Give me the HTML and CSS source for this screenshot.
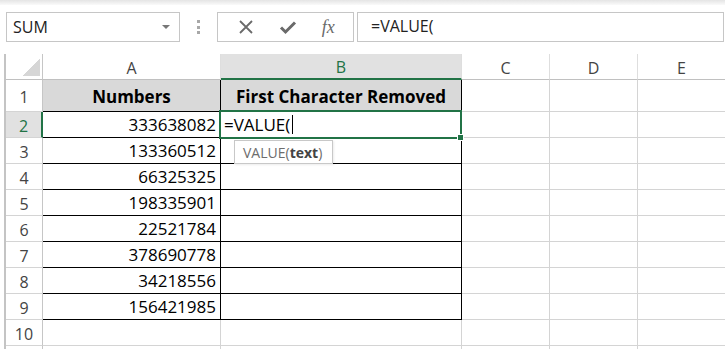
FILE: index.html
```html
<!DOCTYPE html>
<html lang="en">
<head>
    <meta charset="UTF-8">
    <title>VALUE formula</title>
    <link rel="stylesheet" href="styles.css">
</head>
<body>

    <div class="top-band"></div>

    <!-- Name box + formula bar -->
    <div class="toolbar">
        <div class="name-box">
            <span>SUM</span>
            <span class="caret"></span>
        </div>
        <div class="grip"><i></i><i></i><i></i></div>
        <div class="fx-buttons">
            <svg width="16" height="16" viewBox="0 0 16 16"><path d="M2 2 L14 14 M14 2 L2 14" stroke="#6a6a6a" stroke-width="1.8" fill="none"/></svg>
            <svg width="18" height="16" viewBox="0 0 18 16"><path d="M2 8.5 L6.5 13 L16 3.5" stroke="#6a6a6a" stroke-width="3" fill="none"/></svg>
            <span class="fx">fx</span>
        </div>
        <div class="formula-input">=VALUE(</div>
    </div>

    <!-- Sheet -->
    <div class="sheet">
        <div class="cell corner"><span class="tri"></span></div>
        <div class="cell col-head">A</div>
        <div class="cell col-head active">B</div>
        <div class="cell col-head">C</div>
        <div class="cell col-head">D</div>
        <div class="cell col-head">E</div>

        <div class="cell row-head">1</div>
        <div class="cell t fill title">Numbers</div>
        <div class="cell t fill title">First Character Removed</div>
        <div class="cell"></div><div class="cell"></div><div class="cell"></div>

        <div class="cell row-head active">2</div>
        <div class="cell t num">333638082</div>
        <div class="cell t editing">=VALUE(<span class="cursor"></span><span class="handle"></span></div>
        <div class="cell"></div><div class="cell"></div><div class="cell"></div>

        <div class="cell row-head">3</div>
        <div class="cell t num">133360512</div>
        <div class="cell t"></div>
        <div class="cell"></div><div class="cell"></div><div class="cell"></div>

        <div class="cell row-head">4</div>
        <div class="cell t num">66325325</div>
        <div class="cell t"></div>
        <div class="cell"></div><div class="cell"></div><div class="cell"></div>

        <div class="cell row-head">5</div>
        <div class="cell t num">198335901</div>
        <div class="cell t"></div>
        <div class="cell"></div><div class="cell"></div><div class="cell"></div>

        <div class="cell row-head">6</div>
        <div class="cell t num">22521784</div>
        <div class="cell t"></div>
        <div class="cell"></div><div class="cell"></div><div class="cell"></div>

        <div class="cell row-head">7</div>
        <div class="cell t num">378690778</div>
        <div class="cell t"></div>
        <div class="cell"></div><div class="cell"></div><div class="cell"></div>

        <div class="cell row-head">8</div>
        <div class="cell t num">34218556</div>
        <div class="cell t"></div>
        <div class="cell"></div><div class="cell"></div><div class="cell"></div>

        <div class="cell row-head">9</div>
        <div class="cell t num">156421985</div>
        <div class="cell t"></div>
        <div class="cell"></div><div class="cell"></div><div class="cell"></div>

        <div class="cell row-head">10</div>
        <div class="cell"></div><div class="cell"></div>
        <div class="cell"></div><div class="cell"></div><div class="cell"></div>

        <!-- next row, only its top edge shows -->
        <div class="cell row-head"></div>
        <div class="cell"></div><div class="cell"></div>
        <div class="cell"></div><div class="cell"></div><div class="cell"></div>

        <!-- function hint under the edited cell -->
        <div class="hint">VALUE(<b>text</b>)</div>
    </div>

</body>
</html>
```

FILE: styles.css
```css
body {
    margin: 0;
    background: #fff;
    font-family: "Open Sans", "Noto Sans", sans-serif;
    overflow: hidden;
}

.top-band {
    height: 5px;
    background: linear-gradient(#e4e4e4, #fafafa);
}

/* Toolbar */
.toolbar {
    display: flex;
    height: 30px;
    margin-top: 7px;
    padding-left: 6px;
}

.name-box {
    box-sizing: border-box;
    width: 174px;
    border: 1px solid #c6c6c6;
    display: flex;
    align-items: center;
    justify-content: space-between;
    padding: 0 9px 0 6px;
    font-size: 16px;
    color: #222;
}

.caret {
    width: 0;
    height: 0;
    border-left: 4px solid transparent;
    border-right: 4px solid transparent;
    border-top: 4px solid #777;
}

.grip {
    width: 37px;
    display: flex;
    flex-direction: column;
    align-items: center;
    justify-content: center;
    gap: 2.5px;
}

.grip i {
    display: block;
    width: 3px;
    height: 3px;
    background: #a8a8a8;
}

.fx-buttons {
    box-sizing: border-box;
    width: 137px;
    border: 1px solid #c6c6c6;
    display: flex;
    align-items: center;
    justify-content: space-around;
    padding: 0 6px 0 8px;
}

.fx {
    font-family: "Liberation Serif", serif;
    font-style: italic;
    font-size: 18px;
    color: #6a6a6a;
}

.formula-input {
    box-sizing: border-box;
    flex: 1;
    margin: 0 1px 0 3px;
    border: 1px solid #c6c6c6;
    padding: 2px 0 0 13px;
    font-size: 16px;
    color: #222;
}

/* Sheet grid */
.sheet {
    position: relative;
    margin: 12px 0 0 4px;
    border-left: 2px solid #c4c4c4;
    display: grid;
    grid-template-columns: 37px 178px 241px 88px 88px 88px;
    grid-template-rows: 26px 32px repeat(10, 26px);
}

.cell {
    box-sizing: border-box;
    border-right: 1px solid #d4d4d4;
    border-bottom: 1px solid #d4d4d4;
    font-size: 17px;
    color: #000;
    display: flex;
    align-items: flex-end;
    padding: 0 4px 1px;
    white-space: nowrap;
}

.corner {
    justify-content: flex-end;
    padding: 0 2px 3px 0;
    border-bottom-color: #c0c0c0;
    border-right-color: #c6c6c6;
}

.tri {
    width: 18px;
    height: 17px;
    background: linear-gradient(to bottom right, transparent 50%, #d6d6d6 50%);
}

.col-head {
    justify-content: center;
    align-items: center;
    padding: 2px 0 0;
    font-size: 16px;
    color: #444;
    border-right-color: #dedede;
    border-bottom-color: #c0c0c0;
}

.col-head.active {
    background: #e1e1e1;
    color: #217346;
    border-bottom: 2px solid #217346;
}

.row-head {
    justify-content: center;
    align-items: center;
    padding: 2px 0 0;
    font-size: 16px;
    color: #444;
    border-right-color: #c6c6c6;
}

.row-head.active {
    background: #e1e1e1;
    color: #217346;
    border-right: 2px solid #217346;
}

/* bordered data block A1:B9 */
.t {
    border-right-color: #000;
    border-bottom-color: #000;
}

.fill {
    background: #d9d9d9;
}

.title {
    justify-content: center;
    font-weight: bold;
    padding-bottom: 3px;
}

.num {
    justify-content: flex-end;
}

.editing {
    position: relative;
    padding-left: 3px;
}

.editing::after {
    content: "";
    position: absolute;
    top: -2px;
    left: -2px;
    right: -1px;
    bottom: -2px;
    border: 2px solid #217346;
}

.cursor {
    display: inline-block;
    width: 0;
    height: 19px;
    margin: 0 0 2px 2px;
    border-left: 1px solid #000;
}

.handle {
    position: absolute;
    right: -3px;
    bottom: -4px;
    width: 5px;
    height: 5px;
    background: #217346;
    border: 1px solid #fff;
    z-index: 1;
}

.hint {
    position: absolute;
    left: 228px;
    top: 86px;
    box-sizing: border-box;
    width: 99px;
    height: 24px;
    background: #fff;
    border: 1px solid #c8c8c8;
    box-shadow: 1px 1px 2px rgba(0, 0, 0, 0.08);
    padding: 2px 0 0 8px;
    font-size: 14px;
    color: #6d6d6d;
}

.hint b {
    color: #444;
}
```
